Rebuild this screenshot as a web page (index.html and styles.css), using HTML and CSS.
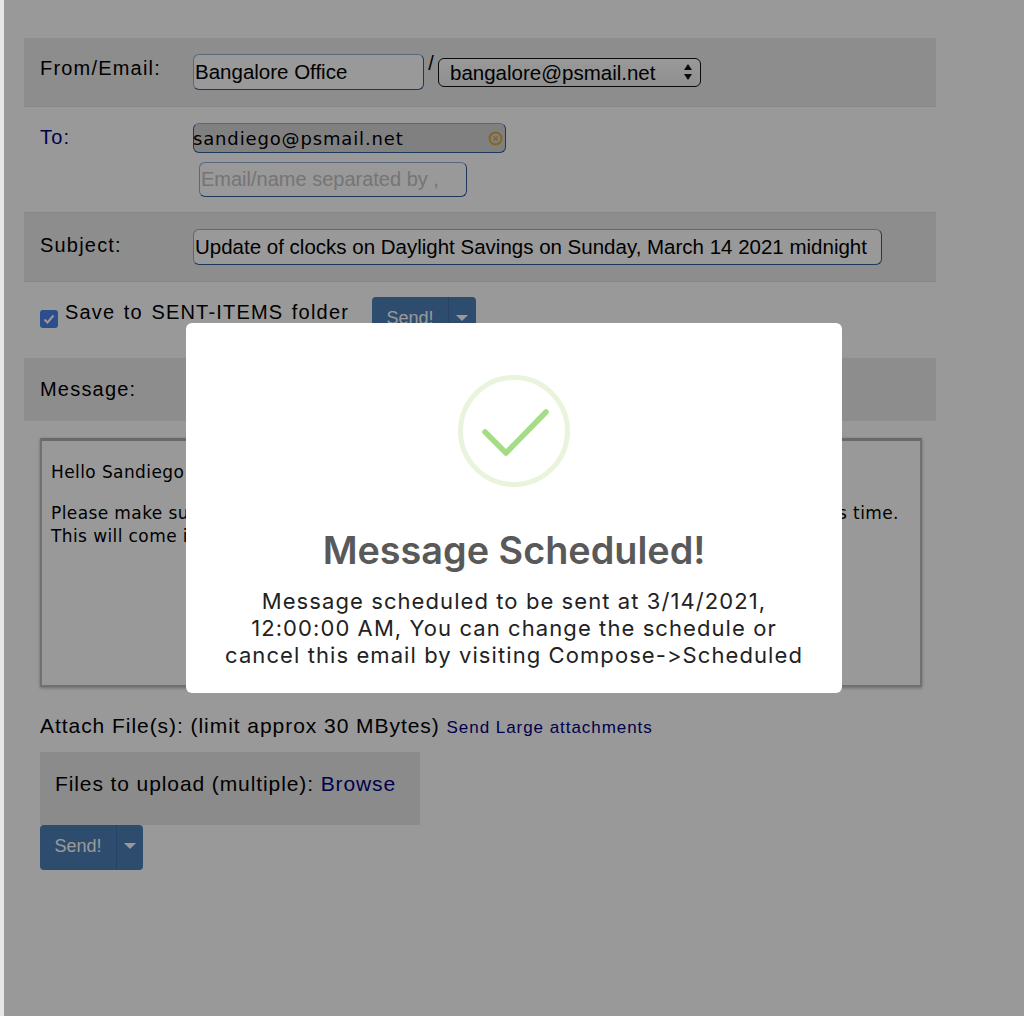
FILE: index.html
```html
<!DOCTYPE html>
<html lang="en">
<head>
  <meta charset="UTF-8">
  <title>Compose</title>
  <link rel="stylesheet" href="styles.css">
</head>
<body>
  <div class="page">
    <form class="compose">
      <div class="row band from-row">
        <label class="lbl">From/Email:</label>
        <input class="txt from-name" type="text" value="Bangalore Office">
        <span class="slash">/</span>
        <div class="fake-select">bangalore@psmail.net
          <svg class="updown" width="10" height="18" viewBox="0 0 10 18"><path d="M5 1l4 6H1zM5 17l4-6H1z" fill="#111"/></svg>
        </div>
      </div>
      <div class="row to-row">
        <label class="lbl lbl-link">To:</label>
        <div class="to-fields">
          <div class="chip">sandiego@psmail.net
            <svg class="chip-x" width="15" height="15" viewBox="0 0 15 15"><circle cx="7.5" cy="7.5" r="6" fill="none" stroke="#e0a93a" stroke-width="2"/><path d="M5.5 5.5l4 4M9.5 5.5l-4 4" stroke="#e0a93a" stroke-width="1.6"/></svg>
          </div>
          <input class="txt to-input" type="text" placeholder="Email/name separated by ,">
        </div>
      </div>
      <div class="row band subject-row">
        <label class="lbl">Subject:</label>
        <input class="txt subject" type="text" value="Update of clocks on Daylight Savings on Sunday, March 14 2021 midnight">
      </div>
      <div class="save-row">
        <span class="check"><svg width="18" height="18" viewBox="0 0 18 18"><path d="M4.5 9.5l3 3 6-7" fill="none" stroke="#fff" stroke-width="2"/></svg></span>
        <span class="save-text">Save to SENT-ITEMS folder</span>
        <div class="send-btn"><span class="send-main">Send!</span><span class="send-caret"></span></div>
      </div>
      <div class="band message-row"><label class="lbl">Message:</label></div>
      <div class="editor">
        <p>Hello Sandiego team,</p>
        <p>Please make sure that all the clocks in the office are updated on this Sunday, around this time.<br>This will come into effect at midnight.</p>
      </div>
      <div class="attach-line">Attach File(s): (limit approx 30 MBytes) <a class="large-link">Send Large attachments</a></div>
      <div class="upload">Files to upload (multiple): <a class="browse">Browse</a></div>
      <div class="send-btn send-bottom"><span class="send-main">Send!</span><span class="send-caret"></span></div>
    </form>
  </div>

  <div class="overlay">
    <div class="modal">
      <svg class="tick" width="112" height="112" viewBox="0 0 112 112">
        <circle cx="56" cy="56" r="53.5" fill="none" stroke="#e9f4dc" stroke-width="5"/>
        <path d="M27 57l21 21 40-41" fill="none" stroke="#a5dc86" stroke-width="5.5" stroke-linecap="round" stroke-linejoin="round"/>
      </svg>
      <h2>Message Scheduled!</h2>
      <p>Message scheduled to be sent at 3/14/2021, 12:00:00 AM, You can change the schedule or cancel this email by visiting Compose-&gt;Scheduled</p>
    </div>
  </div>
</body>
</html>
```

FILE: styles.css
```css
html, body {
  height: 100%;
  margin: 0;
}
body {
  font-family: "Liberation Sans", Arial, sans-serif;
  background: #e6e6e6;
  color: #000;
  overflow: hidden;
}
.page {
  height: 100%;
  margin-left: 4px;
  background: #fff;
  box-sizing: border-box;
  padding: 38px 0 0 20px;
}
.compose {
  width: 912px;
}
.band {
  background: #ececec;
}
.row {
  display: flex;
  align-items: flex-start;
  padding-left: 16px;
  box-sizing: border-box;
  border-bottom: 1px solid #e2e2e2;
}
.lbl {
  width: 153px;
  flex: none;
  font-size: 20px;
  letter-spacing: 1.2px;
  line-height: 22px;
}
.lbl-link {
  color: #000080;
}
.txt {
  font-family: "Liberation Sans", Arial, sans-serif;
  font-size: 20.5px;
  color: #000;
  height: 36px;
  box-sizing: border-box;
  padding: 0;
  margin: 0;
  background: #fff;
  border: 1px solid #2f5f98;
  border-top-color: #8fb0d0;
  border-left-color: #8fb0d0;
  border-radius: 6px;
  outline: none;
}
.txt::placeholder {
  color: #c4c4c4;
  opacity: 1;
}
.from-row {
  height: 69px;
  padding-top: 19px;
}
.from-name {
  width: 231px;
  margin-top: -3px;
  padding-left: 1px;
}
.slash {
  font-size: 20px;
  width: 14px;
  text-align: center;
  margin-top: -5px;
}
.fake-select {
  width: 263px;
  height: 29px;
  margin-top: 1px;
  box-sizing: border-box;
  border: 1px solid #111;
  border-radius: 6px;
  font-size: 20.5px;
  line-height: 27px;
  padding-left: 11px;
  position: relative;
  background: linear-gradient(#fff, #f0f0f0);
}
.updown {
  position: absolute;
  right: 7px;
  top: 4px;
}
.to-row {
  height: 106px;
  padding-top: 19px;
}
.to-fields {
  display: flex;
  flex-direction: column;
}
.chip {
  width: 313px;
  height: 30px;
  margin-top: -3px;
  box-sizing: border-box;
  border: 1px solid #2f5f98;
  border-top-color: #8fb0d0;
  border-radius: 6px;
  background: #d6d6d6;
  font-family: "DejaVu Sans", Verdana, sans-serif;
  font-size: 18px;
  letter-spacing: 0.85px;
  line-height: 30px;
  text-indent: -1px;
  position: relative;
}
.chip-x {
  position: absolute;
  right: 2px;
  top: 7px;
}
.to-input {
  width: 268px;
  height: 35px;
  margin: 9px 0 0 6px;
  padding-left: 1px;
  font-size: 20px;
}
.subject-row {
  height: 69px;
  padding-top: 21px;
}
.subject {
  width: 689px;
  margin-top: -5px;
  padding-left: 1px;
}
.save-row {
  height: 76px;
  display: flex;
  align-items: flex-start;
  padding: 15px 0 0 16px;
  box-sizing: border-box;
}
.check {
  width: 18px;
  height: 18px;
  margin-top: 13px;
  background: #4a82e8;
  border-radius: 3px;
  flex: none;
}
.save-text {
  font-size: 20px;
  letter-spacing: 1.2px;
  word-spacing: 1.7px;
  margin-left: 7px;
  margin-top: 4px;
}
.save-row .send-btn {
  margin-left: 23px;
}
.send-btn {
  display: inline-flex;
  height: 45px;
  background: #4d80b8;
  border-radius: 4px;
  color: #fff;
  font-size: 18px;
}
.send-main {
  flex: none;
  width: 76px;
  text-align: center;
  line-height: 43px;
  border-right: 1px solid #3f70b0;
}
.send-caret {
  width: 27px;
  position: relative;
}
.send-caret::after {
  content: "";
  position: absolute;
  left: 7px;
  top: 18px;
  border-left: 6px solid transparent;
  border-right: 6px solid transparent;
  border-top: 6px solid #fff;
}
.message-row {
  height: 63px;
  padding: 20px 0 0 16px;
  box-sizing: border-box;
}
.editor {
  margin: 17px 0 0 16px;
  width: 882px;
  height: 249px;
  box-sizing: border-box;
  border: 2px solid #bdbdbd;
  border-top: 3px solid #b0b0b0;
  box-shadow: 0 1px 3px rgba(0,0,0,.3);
  background: #fff;
  padding: 20px 9px;
  font-family: "DejaVu Sans", Verdana, sans-serif;
  font-size: 17px;
  letter-spacing: 0.4px;
  line-height: 23px;
  white-space: nowrap;
}
.editor p {
  margin: 0 0 18px;
}
.attach-line {
  margin: 28px 0 0 16px;
  font-size: 21px;
  letter-spacing: 0.95px;
  line-height: 22px;
}
.large-link {
  font-size: 17px;
  color: #000080;
}
.upload {
  margin: 13px 0 0 16px;
  width: 380px;
  height: 73px;
  box-sizing: border-box;
  background: #e8e8e8;
  padding: 21px 0 0 15px;
  font-size: 21px;
  letter-spacing: 0.9px;
  line-height: 22px;
}
.browse {
  color: #000080;
}
.send-bottom {
  margin-left: 16px;
  display: flex;
  width: 103px;
}
.send-bottom .send-caret {
  width: 26px;
}
.overlay {
  position: fixed;
  top: 0;
  right: 0;
  bottom: 0;
  left: 4px;
  background: rgba(0,0,0,.4);
  display: flex;
  align-items: center;
  justify-content: center;
}
.modal {
  width: 656px;
  height: 370px;
  box-sizing: border-box;
  background: #fff;
  border-radius: 6px;
  padding-top: 52px;
  text-align: center;
  font-family: Inter, sans-serif;
}
.tick {
  display: block;
  margin: 0 auto;
}
.modal h2 {
  margin: 41px 0 0;
  font-size: 37.8px;
  font-weight: 600;
  line-height: 44px;
  color: #595959;
}
.modal p {
  margin: 16px 28px 0;
  font-size: 22px;
  line-height: 27px;
  color: #222;
  letter-spacing: 1.08px;
}
```
